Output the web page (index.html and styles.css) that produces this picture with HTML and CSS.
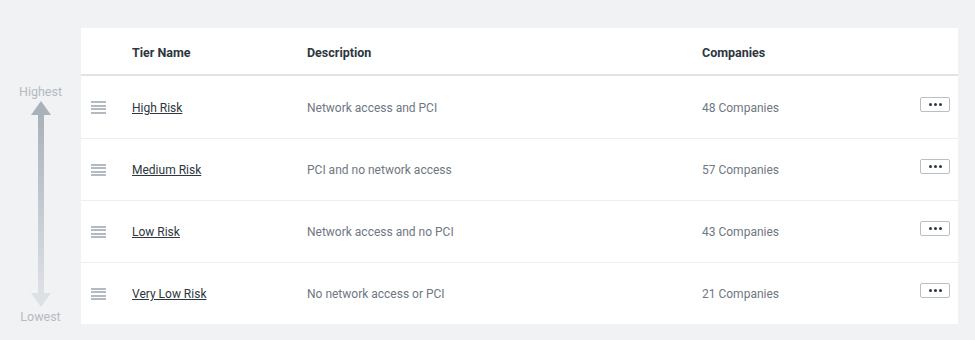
FILE: index.html
```html
<!DOCTYPE html>
<html lang="en">
<head>
  <meta charset="UTF-8" />
  <title>Risk Tiers</title>
  <link rel="stylesheet" href="styles.css">
</head>
<body>
  <div class="page">
    <div class="scale">
      <span class="scale-label">Highest</span>
      <div class="scale-arrow">
        <span class="head head-up"></span>
        <span class="shaft"></span>
        <span class="head head-down"></span>
      </div>
      <span class="scale-label">Lowest</span>
    </div>
    <div class="card">
      <div class="row head-row">
        <span></span>
        <span>Tier Name</span>
        <span>Description</span>
        <span>Companies</span>
        <span></span>
      </div>
      <div class="row">
        <span class="handle"><i></i><i></i><i></i><i></i></span>
        <a href="#">High Risk</a>
        <span class="muted">Network access and PCI</span>
        <span class="muted">48 Companies</span>
        <button class="more"><b></b><b></b><b></b></button>
      </div>
      <div class="row">
        <span class="handle"><i></i><i></i><i></i><i></i></span>
        <a href="#">Medium Risk</a>
        <span class="muted">PCI and no network access</span>
        <span class="muted">57 Companies</span>
        <button class="more"><b></b><b></b><b></b></button>
      </div>
      <div class="row">
        <span class="handle"><i></i><i></i><i></i><i></i></span>
        <a href="#">Low Risk</a>
        <span class="muted">Network access and no PCI</span>
        <span class="muted">43 Companies</span>
        <button class="more"><b></b><b></b><b></b></button>
      </div>
      <div class="row">
        <span class="handle"><i></i><i></i><i></i><i></i></span>
        <a href="#">Very Low Risk</a>
        <span class="muted">No network access or PCI</span>
        <span class="muted">21 Companies</span>
        <button class="more"><b></b><b></b><b></b></button>
      </div>
    </div>
  </div>
</body>
</html>
```

FILE: styles.css
```css
body {
  margin: 0;
  background: #f1f2f4;
  font-family: Roboto, "Liberation Sans", sans-serif;
  font-size: 12px;
  color: #2e3640;
}
.page {
  display: flex;
  padding: 28px 17px 16px 0;
}
.scale {
  width: 81px;
  display: flex;
  flex-direction: column;
  align-items: center;
  padding-top: 57px;
}
.scale-label {
  color: #b4bac2;
  font-size: 12.5px;
  line-height: 14px;
}
.scale-arrow {
  display: flex;
  flex-direction: column;
  align-items: center;
  margin: 2px 0 3px;
}
.head {
  width: 0;
  height: 0;
  border-left: 10px solid transparent;
  border-right: 10px solid transparent;
}
.head-up { border-bottom: 14px solid #a9b1ba; }
.head-down { border-top: 14px solid #dde1e6; }
.shaft {
  width: 6px;
  height: 178px;
  background: linear-gradient(#a9b1ba, #dde1e6);
}
.card {
  flex: 1;
  background: #fff;
}
.row {
  display: grid;
  grid-template-columns: 51px 175px 395px 1fr 38px;
  align-items: center;
  height: 62px;
  box-sizing: border-box;
  padding-top: 1px;
  border-top: 1px solid #eceef1;
}
.head-row {
  height: 48px;
  border-top: none;
  border-bottom: 2px solid #e0e3e7;
  font-size: 12.5px;
  font-weight: bold;
  padding-top: 2px;
}
.head-row + .row { border-top: none; }
.row a {
  color: #2e3640;
  text-decoration: underline;
  justify-self: start;
}
.muted { color: #6f7782; }
.handle {
  display: flex;
  flex-direction: column;
  gap: 1.5px;
  width: 15px;
  margin-left: 10px;
}
.handle i {
  display: block;
  height: 2px;
  background: #b3bac2;
}
.more {
  width: 30px;
  height: 15px;
  padding: 0;
  margin-top: -7px;
  border: 1px solid #b9bfc6;
  border-radius: 2px;
  background: #fff;
  display: flex;
  justify-content: center;
  align-items: center;
  gap: 2px;
}
.more b {
  width: 3px;
  height: 3px;
  border-radius: 50%;
  background: #2e3640;
}
```
